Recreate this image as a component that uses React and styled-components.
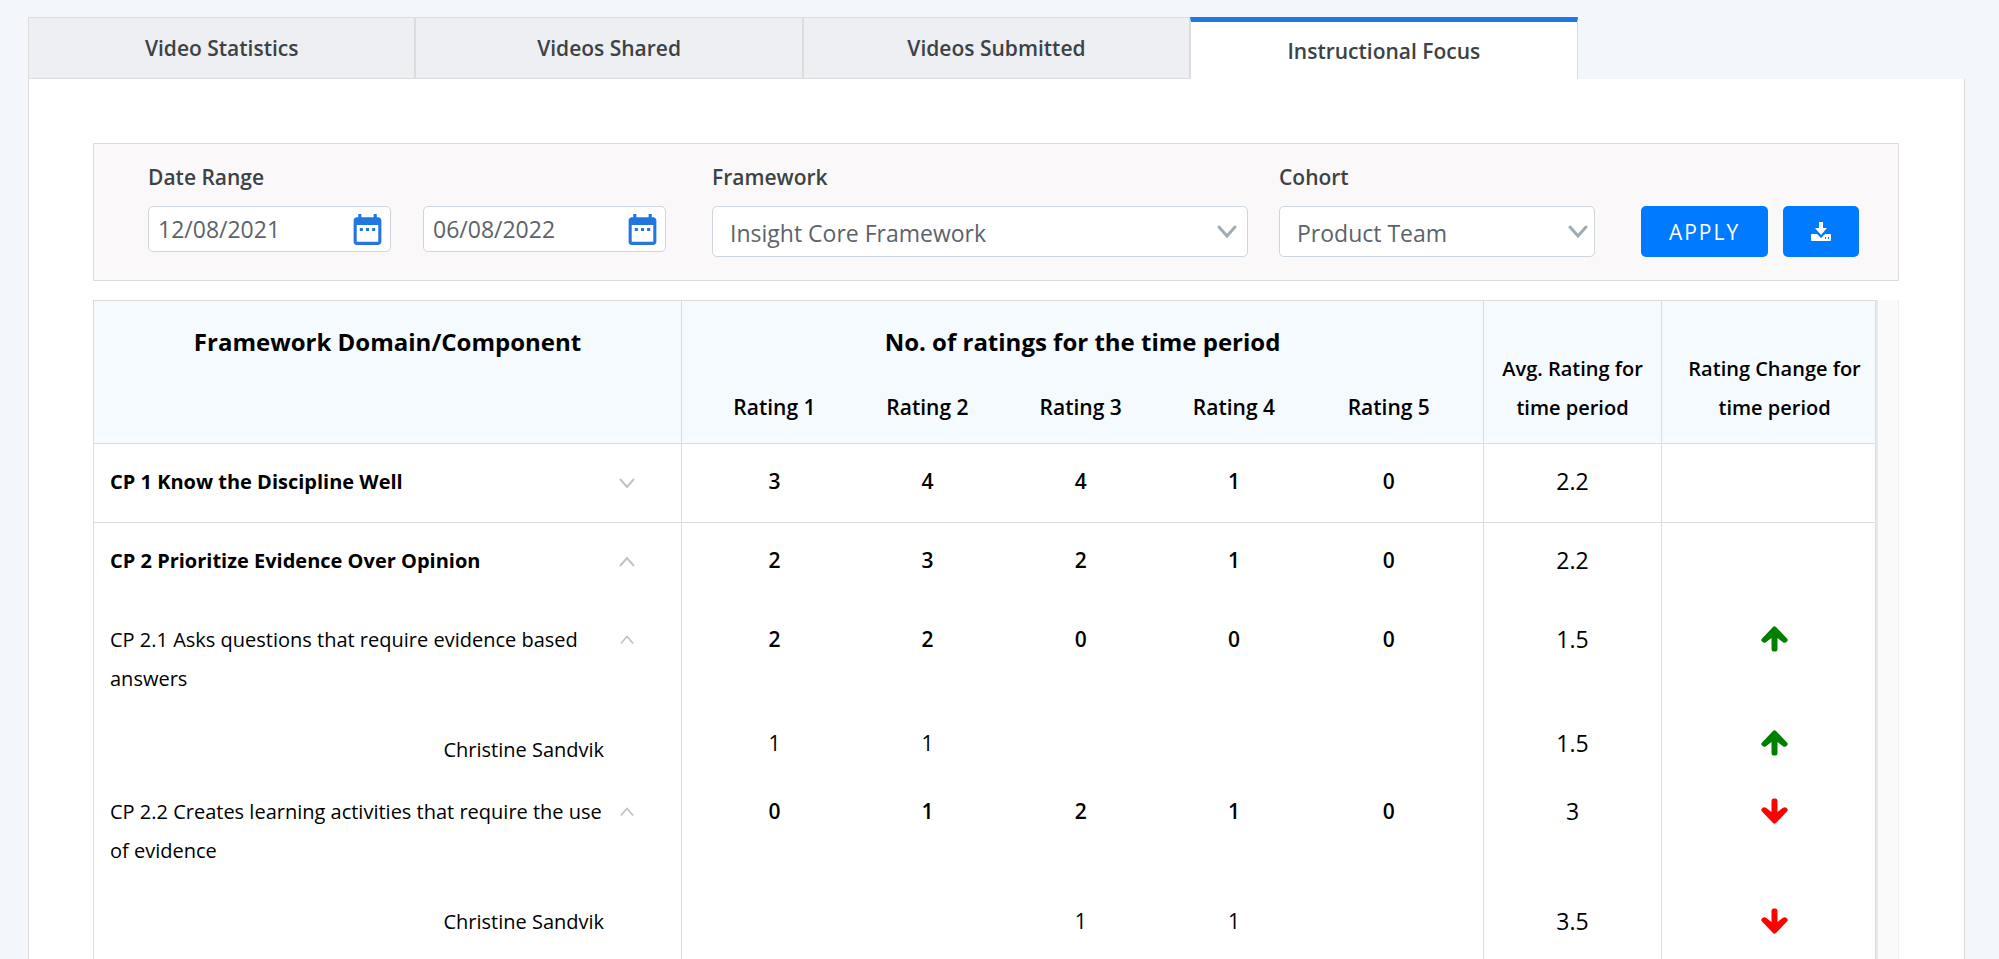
import React from "react";
import styled, { createGlobalStyle, css } from "styled-components";
import { MdDateRange } from "react-icons/md";

const line = "#dcdcdc";

const GlobalStyle = createGlobalStyle`
  * { box-sizing: border-box; }
  body {
    margin: 0;
    background: #f3f7fb;
    color: #000;
    font-family: "Open Sans", "Noto Sans", sans-serif;
    font-size: 20px;
  }
`;

const Page = styled.main`
  display: flex;
  flex-direction: column;
  height: 100vh;
  padding: 17px 34px 0 28px;
  overflow: hidden;
`;

const TabBar = styled.nav`
  display: flex;
  flex: none;
  height: 62px;
`;

const Tab = styled.button`
  width: 20%;
  padding: 0;
  border: 1px solid ${line};
  background: #eeeff3;
  color: #3c4245;
  font: 600 21px "Open Sans", "Noto Sans", sans-serif;
  ${(p) =>
    p.$active &&
    css`
      border-top: 5px solid #2176e0;
      border-bottom: 0;
      background: #fff;
    `}
`;

const Panel = styled.section`
  display: flex;
  flex: 1;
  flex-direction: column;
  gap: 19px;
  min-height: 0;
  padding: 64px 65px 0 64px;
  border: solid ${line};
  border-width: 0 1px;
  background: #fff;
`;

const Filters = styled.form`
  display: flex;
  flex: none;
  height: 138px;
  padding: 17px 39px 0 54px;
  border: 1px solid ${line};
  background: #faf8f9;
`;

const Field = styled.div`
  display: flex;
  flex-direction: column;
  flex: ${(p) => p.$grow} 1 0;
  min-width: 0;
  margin-right: ${(p) => p.$gap}px;
`;

const Label = styled.label`
  height: 45px;
  color: #3c4245;
  font-size: 21px;
  font-weight: 600;
  line-height: 32px;
`;

const DatePair = styled.div`
  display: flex;
  gap: 32px;
`;

const controlFrame = css`
  border: 1px solid #cfd5dc;
  border-radius: 5px;
  background: #fff;
`;

const DateBox = styled.div`
  ${controlFrame}
  display: flex;
  flex: 1;
  align-items: center;
  min-width: 0;
  height: 46px;
  padding: 0 4px 0 9px;
`;

const controlText = css`
  min-width: 0;
  border: 0;
  background: none;
  color: #5c636b;
  font: 400 23px "Open Sans", "Noto Sans", sans-serif;
  outline: 0;
`;

const DateInput = styled.input`
  ${controlText}
  flex: 1;
  padding: 0;
`;

const IconButton = styled.button`
  display: flex;
  padding: 0;
  border: 0;
  background: none;
  color: #2176e0;
`;

const SelectBox = styled.div`
  ${controlFrame}
  display: grid;
  align-items: center;
  height: 51px;
  > * { grid-area: 1 / 1; }
  svg {
    justify-self: end;
    margin-right: ${(p) => p.$inset}px;
    pointer-events: none;
  }
`;

const Select = styled.select`
  ${controlText}
  width: 100%;
  height: 49px;
  padding: 2px 36px 0 17px;
  appearance: none;
`;

const Actions = styled.div`
  display: flex;
  gap: 15px;
  padding-top: 45px;
`;

const Action = styled.button`
  display: flex;
  align-items: center;
  justify-content: center;
  width: ${(p) => p.$width}px;
  height: 51px;
  padding: 0;
  border: 0;
  border-radius: 5px;
  background: #007bff;
  color: #fff;
  font: 400 21px "Open Sans", "Noto Sans", sans-serif;
  letter-spacing: 2px;
`;

const TableArea = styled.div`
  flex: 1;
  min-height: 0;
  padding-right: 20px;
  border-right: 1px solid #efefef;
  background: #fafafa;
  overflow: hidden;
`;

const TableFrame = styled.div`
  height: 100%;
  border-right: 2px solid #e9e9e9;
  overflow: hidden;
`;

const Table = styled.table`
  width: 100%;
  border-collapse: collapse;
  table-layout: fixed;
  background: #fff;
  line-height: 39px;
`;

const Col = styled.col`
  width: ${(p) => p.$width}%;
`;

const HeadRow = styled.tr`
  height: ${(p) => p.$height}px;
`;

const Head = styled.th`
  padding: ${(p) => p.$top || 0}px ${(p) => p.$right || 0}px 0 ${(p) => p.$left || 0}px;
  border: solid ${line};
  border-width: ${(p) => p.$edges || "1px"};
  background: #f5faff;
  font-size: ${(p) => p.$size || 21}px;
  font-weight: ${(p) => p.$weight || 600};
  vertical-align: top;
`;

const Row = styled.tr`
  height: ${(p) => p.$height}px;
  border-top: ${(p) => (p.$ruled ? `1px solid ${line}` : "0")};
  > td, > th { padding-top: ${(p) => (p.$tight ? 9 : 18)}px; }
`;

const Cell = styled.td`
  padding: 0 ${(p) => p.$right || 0}px 0 ${(p) => p.$left || 0}px;
  border: solid ${line};
  border-width: ${(p) => (p.$edge ? "0 1px" : "0")};
  font-size: ${(p) => p.$size || 21}px;
  font-weight: ${(p) => (p.$strong ? 600 : 400)};
  text-align: center;
  vertical-align: top;
`;

const NameCell = styled.th`
  padding: 0 46px 0 16px;
  border: solid ${line};
  border-width: 0 1px;
  font-size: 20px;
  font-weight: ${(p) => (p.$level === "domain" ? 700 : 400)};
  text-align: left;
  vertical-align: top;
`;

const NameLine = styled.div`
  display: flex;
  justify-content: space-between;
  gap: 12px;
`;

const Person = styled.div`
  padding: ${(p) => p.$drop}px 31px 0 0;
  text-align: right;
`;

const Toggle = styled.button`
  display: flex;
  flex: none;
  align-items: center;
  justify-content: center;
  width: 16px;
  height: 41px;
  padding: 0;
  border: 0;
  background: none;
`;

const TrendIcon = styled.svg`
  display: block;
  width: 27px;
  height: 39px;
  margin: 0 auto;
  fill: ${(p) => (p.$up ? "#008000" : "#f00")};
`;

function Chevron({ up, size }) {
  return (
    <svg width={size} height={size} viewBox="0 0 16 16" fill="none" stroke="#bcc4ca" strokeWidth="2" aria-hidden="true">
      <path d={up ? "M1 12L8 4L15 12" : "M1 4L8 12L15 4"} />
    </svg>
  );
}

function SelectChevron() {
  return (
    <svg width="20" height="16" viewBox="0 0 20 16" fill="none" stroke="#a0acb5" strokeWidth="3" strokeLinecap="round" aria-hidden="true">
      <path d="M2 3L10 12L18 3" />
    </svg>
  );
}

function DownloadIcon() {
  return (
    <svg width="20" height="20" viewBox="0 0 20 20" fill="#fff" aria-hidden="true">
      <path d="M8 0h4v6h4l-6 7L4 6h4z" />
      <path fillRule="evenodd" d="M1 12h5l4 4 4-4h5q1 0 1 1v5q0 1-1 1H1q-1 0-1-1v-5q0-1 1-1zM14 15v2h1v-2zM17 15v2h1v-2z" />
    </svg>
  );
}

function Trend({ up }) {
  return (
    <TrendIcon $up={up} viewBox="0 0 27 39" role="img" aria-label={up ? "Increase" : "Decrease"}>
      <path
        transform={up ? undefined : "rotate(180 13.5 19)"}
        d="M12 7Q13.5 5.500 15 7L26 18.500Q27.500 20 26 21.500L25.500 22Q24 23.500 22 22.300L16.500 18V29Q16.500 31.500 14.500 31.500H12.500Q10.500 31.500 10.500 29V18L5 22.300Q3 23.500 1.500 22L1 21.500Q-.5 20 1 18.500Z"
      />
    </TrendIcon>
  );
}

const tabs = ["Video Statistics", "Videos Shared", "Videos Submitted", "Instructional Focus"];

const columnWidths = [33, 9.5, 8.6, 8.6, 8.6, 9.7, 10, 12];

const rows = [
  { name: "CP 1 Know the Discipline Well", level: "domain", ratings: [3, 4, 4, 1, 0], avg: "2.2", height: 79, ruled: true },
  { name: "CP 2 Prioritize Evidence Over Opinion", level: "domain", open: true, ratings: [2, 3, 2, 1, 0], avg: "2.2", height: 79, ruled: true },
  { name: "CP 2.1 Asks questions that require evidence based answers", level: "component", open: true, ratings: [2, 2, 0, 0, 0], avg: "1.5", trend: "up", height: 104 },
  { name: "Christine Sandvik", level: "person", drop: 6, ratings: [1, 1, "", "", ""], avg: "1.5", trend: "up", height: 77 },
  { name: "CP 2.2 Creates learning activities that require the use of evidence", level: "component", open: true, ratings: [0, 1, 2, 1, 0], avg: "3", trend: "down", height: 101, tight: true },
  { name: "Christine Sandvik", level: "person", drop: 0, ratings: ["", "", 1, 1, ""], avg: "3.5", trend: "down", height: 104 },
];

export default function App() {
  return (
    <>
      <GlobalStyle />
      <Page>
        <TabBar>
          {tabs.map((t, i) => (
            <Tab key={t} type="button" $active={i === 3}>{t}</Tab>
          ))}
        </TabBar>
        <Panel>
          <Filters onSubmit={(e) => e.preventDefault()}>
            <Field $grow={518} $gap={46}>
              <Label htmlFor="from">Date Range</Label>
              <DatePair>
                <DateBox>
                  <DateInput id="from" defaultValue="12/08/2021" />
                  <IconButton type="button" aria-label="Pick start date"><MdDateRange size={37} /></IconButton>
                </DateBox>
                <DateBox>
                  <DateInput aria-label="End date" defaultValue="06/08/2022" />
                  <IconButton type="button" aria-label="Pick end date"><MdDateRange size={37} /></IconButton>
                </DateBox>
              </DatePair>
            </Field>
            <Field $grow={536} $gap={31}>
              <Label htmlFor="framework">Framework</Label>
              <SelectBox $inset={10}>
                <Select id="framework"><option>Insight Core Framework</option></Select>
                <SelectChevron />
              </SelectBox>
            </Field>
            <Field $grow={316} $gap={46}>
              <Label htmlFor="cohort">Cohort</Label>
              <SelectBox $inset={6}>
                <Select id="cohort"><option>Product Team</option></Select>
                <SelectChevron />
              </SelectBox>
            </Field>
            <Actions>
              <Action $width={127}>APPLY</Action>
              <Action $width={76} type="button" aria-label="Download"><DownloadIcon /></Action>
            </Actions>
          </Filters>
          <TableArea>
            <TableFrame>
              <Table>
                <colgroup>
                  {columnWidths.map((w, i) => <Col key={i} $width={w} />)}
                </colgroup>
                <thead>
                  <HeadRow $height={72}>
                    <Head rowSpan={2} $top={21} $size={24} $weight={700}>Framework Domain/Component</Head>
                    <Head colSpan={5} $top={21} $size={24} $weight={700} $edges="1px 1px 0">No. of ratings for the time period</Head>
                    <Head rowSpan={2} $top={48} $size={20} $left={16} $right={16}>Avg. Rating for time period</Head>
                    <Head rowSpan={2} $top={48} $size={20} $left={24} $right={12}>Rating Change for time period</Head>
                  </HeadRow>
                  <HeadRow $height={71}>
                    {[1, 2, 3, 4, 5].map((n) => (
                      <Head key={n} $top={15} $edges="0 0 1px" $left={n === 1 ? 16 : 0} $right={n === 5 ? 16 : 0}>Rating {n}</Head>
                    ))}
                  </HeadRow>
                </thead>
                <tbody>
                  {rows.map((r, i) => (
                    <Row key={i} $height={r.height} $ruled={r.ruled} $tight={r.tight}>
                      <NameCell scope="row" $level={r.level}>
                        {r.level === "person" ? (
                          <Person $drop={r.drop}>{r.name}</Person>
                        ) : (
                          <NameLine>
                            <span>{r.name}</span>
                            <Toggle type="button" aria-expanded={!!r.open} aria-label={`Toggle ${r.name}`}>
                              <Chevron up={r.open} size={r.level === "domain" ? 16 : 14} />
                            </Toggle>
                          </NameLine>
                        )}
                      </NameCell>
                      {r.ratings.map((v, n) => (
                        <Cell key={n} $strong={r.level !== "person"} $left={n === 0 ? 16 : 0} $right={n === 4 ? 16 : 0}>{v}</Cell>
                      ))}
                      <Cell $size={23} $edge>{r.avg}</Cell>
                      <Cell $edge $left={12}>{r.trend && <Trend up={r.trend === "up"} />}</Cell>
                    </Row>
                  ))}
                </tbody>
              </Table>
            </TableFrame>
          </TableArea>
        </Panel>
      </Page>
    </>
  );
}
